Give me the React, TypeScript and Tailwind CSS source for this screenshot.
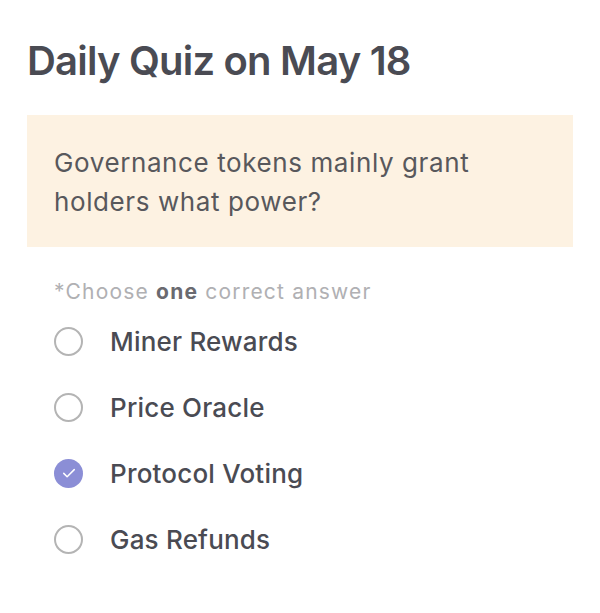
import React from 'react';

const options = ['Miner Rewards', 'Price Oracle', 'Protocol Voting', 'Gas Refunds'];

const Radio = ({ checked }: { checked: boolean }) =>
  checked ? (
    <span className="flex h-[29px] w-[29px] items-center justify-center rounded-full bg-[#8b8ed6]">
      <svg width="18" height="18" viewBox="0 0 24 24" fill="none" stroke="white" strokeWidth="2" strokeLinecap="round" strokeLinejoin="round">
        <path d="M5 12.5l4.5 4.5L19 7.5" />
      </svg>
    </span>
  ) : (
    <span className="h-[29px] w-[29px] rounded-full border-2 border-[#b4b4b4]" />
  );

const App = () => {
  const selected = 'Protocol Voting';
  return (
    <div className="h-[613px] w-[600px] bg-white px-[27px] pt-[36px] font-['Inter',sans-serif]">
      <h1 className="text-[40px] font-semibold leading-[50px] tracking-[-0.8px] text-[#4a4b53]">Daily Quiz on May 18</h1>
      <div className="mt-[29px] bg-[#fdf2e2] px-[27px] pb-[26px] pt-[28px]">
        <p className="text-[26px] leading-[39px] tracking-[0.6px] text-[#58585c]">
          Governance tokens mainly grant
          <br />
          holders what power?
        </p>
      </div>
      <p className="mt-[33px] pl-[27px] text-[21px] leading-[24px] tracking-[1.2px] text-[#b0b0b3]">
        *Choose <span className="font-bold text-[#6a6a70]">one</span> correct answer
      </p>
      <div className="mt-[20px] flex flex-col gap-[32px] pl-[27px]">
        {options.map((o) => (
          <div key={o} className="flex h-[34px] items-center gap-[27px]">
            <Radio checked={o === selected} />
            <span className="text-[26px] font-medium tracking-[0.2px] text-[#4a4b53]">{o}</span>
          </div>
        ))}
      </div>
    </div>
  );
};

export default App;
